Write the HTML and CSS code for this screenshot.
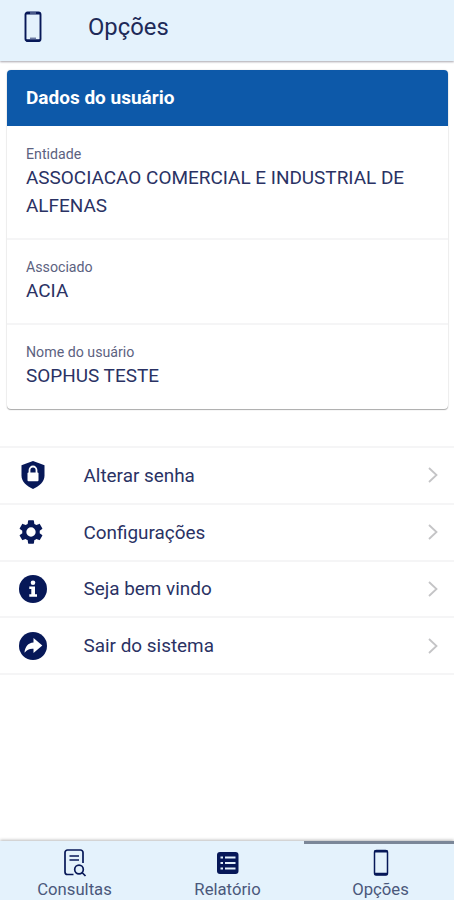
FILE: index.html
```html
<!DOCTYPE html>
<html lang="pt-BR">
<head>
    <meta charset="UTF-8">
    <title>Opções</title>
    <link rel="stylesheet" href="styles.css">
</head>
<body>
    <header class="toolbar">
        <svg class="toolbar-icon" viewBox="0 0 18 32">
            <rect x="1.500" y="1.500" width="15" height="28.500" rx="2" fill="none" stroke="currentColor" stroke-width="1.900"/>
            <path d="M2 2.200h14M2 29.400h14" stroke="currentColor" stroke-width="2.400"/>
            <path d="M6 27.200h6" stroke="currentColor" stroke-width=".8"/>
            <path d="M6 2h6" stroke="#e4f2fc" stroke-width=".6"/>
        </svg>
        <h1>Opções</h1>
    </header>

    <main>
        <!-- Dados do usuário -->
        <section class="card">
            <h2>Dados do usuário</h2>
            <div class="field">
                <span class="label">Entidade</span>
                <p>ASSOCIACAO COMERCIAL E INDUSTRIAL DE ALFENAS</p>
            </div>
            <div class="field">
                <span class="label">Associado</span>
                <p>ACIA</p>
            </div>
            <div class="field">
                <span class="label">Nome do usuário</span>
                <p>SOPHUS TESTE</p>
            </div>
        </section>

        <!-- Menu -->
        <nav class="menu">
            <a href="#">
                <svg class="menu-icon" viewBox="0 0 28 28">
                    <path d="M14 0l11.500 4.200v10.300c0 6-5 10.700-11.500 13.500C7.500 25.200 2.500 20.500 2.500 14.500V4.200z" fill="currentColor"/>
                    <path d="M10.500 12V9a3.500 3.500 0 0 1 7 0V12" fill="none" stroke="#fff" stroke-width="1.800"/>
                    <rect x="8.500" y="11.500" width="11" height="8.800" rx="1" fill="#fff"/>
                </svg>
                <span>Alterar senha</span>
                <svg class="chevron" viewBox="0 0 10 16"><path d="M1 1l7.500 7L1 15"/></svg>
            </a>
            <a href="#">
                <svg class="menu-icon gear" viewBox="0 0 24 24">
                    <path fill="currentColor" d="M19.430 12.980c.04-.32.07-.64.07-.98s-.03-.66-.07-.98l2.110-1.650c.19-.15.24-.42.12-.64l-2-3.460c-.12-.22-.39-.3-.61-.22l-2.490 1c-.52-.4-1.080-.73-1.690-.98l-.38-2.650C14.460 2.180 14.250 2 14 2h-4c-.25 0-.46.18-.49.42l-.38 2.650c-.61.25-1.170.59-1.690.98l-2.490-1c-.23-.09-.49 0-.61.22l-2 3.460c-.13.22-.07.49.12.64l2.110 1.650c-.04.32-.07.65-.07.98s.03.66.07.98l-2.110 1.650c-.19.15-.24.42-.12.64l2 3.460c.12.22.39.3.61.22l2.490-1c.52.4 1.080.73 1.690.98l.38 2.650c.03.24.24.42.49.42h4c.25 0 .46-.18.49-.42l.38-2.650c.61-.25 1.170-.59 1.690-.98l2.490 1c.23.09.49 0 .61-.22l2-3.460c.12-.22.07-.49-.12-.64l-2.110-1.650zM12 16a4 4 0 1 1 0-8 4 4 0 0 1 0 8z"/>
                </svg>
                <span>Configurações</span>
                <svg class="chevron" viewBox="0 0 10 16"><path d="M1 1l7.500 7L1 15"/></svg>
            </a>
            <a href="#">
                <svg class="menu-icon" viewBox="0 0 28 28">
                    <circle cx="14" cy="14" r="14" fill="currentColor"/>
                    <circle cx="14" cy="7.800" r="2.300" fill="#fff"/>
                    <path d="M10.300 11.500h5.700v7.700h2v2.500h-7.700v-2.500h2v-5.200h-2z" fill="#fff"/>
                </svg>
                <span>Seja bem vindo</span>
                <svg class="chevron" viewBox="0 0 10 16"><path d="M1 1l7.500 7L1 15"/></svg>
            </a>
            <a href="#">
                <svg class="menu-icon" viewBox="0 0 28 28">
                    <circle cx="14" cy="14" r="14" fill="currentColor"/>
                    <path d="M14.500 6l8.800 7.500-8.800 7.500v-4.300c-4-.3-6.500 1-9 4 .5-6 3.500-9.700 9-10.200z" fill="#fff"/>
                </svg>
                <span>Sair do sistema</span>
                <svg class="chevron" viewBox="0 0 10 16"><path d="M1 1l7.500 7L1 15"/></svg>
            </a>
        </nav>
    </main>

    <footer class="tabs">
        <a href="#">
            <svg viewBox="0 0 28 28">
                <g fill="none" stroke="currentColor" stroke-width="1.700">
                    <path d="M12.500 25.500H6.500a2.500 2.500 0 0 1-2.500-2.500V3.500A2.500 2.500 0 0 1 6.500 1h13a2.500 2.500 0 0 1 2.500 2.500V14"/>
                    <path d="M8.500 7h9.500M8.500 11h9.500" stroke-width="1.300"/>
                    <circle cx="18" cy="20.500" r="4.300"/>
                    <path d="M21 23.500l3.500 3.500"/>
                </g>
            </svg>
            <span>Consultas</span>
        </a>
        <a href="#">
            <svg viewBox="0 0 28 28">
                <rect x="3" y="3" width="21.500" height="22" rx="3" fill="currentColor"/>
                <path d="M6.500 8.500h2.500M6.500 14h2.500M6.500 19.500h2.500M11 8.500h10.500M11 14h10.500M11 19.500h10.500" stroke="#e4f2fc" stroke-width="2"/>
            </svg>
            <span>Relatório</span>
        </a>
        <a href="#" class="active">
            <svg viewBox="0 0 28 28">
                <rect x="7.500" y="1.500" width="13" height="24.500" rx="2" fill="none" stroke="currentColor" stroke-width="1.500"/>
                <path d="M7.500 2.300h13M7.500 25h13" stroke="currentColor" stroke-width="2.400"/>
            </svg>
            <span>Opções</span>
        </a>
    </footer>
</body>
</html>
```

FILE: styles.css
```css
:root {
    --navy: #071858;
    --blue: #0d59a9;
    --light: #e4f2fc;
    --line: #f5f5f6;
}

* {
    box-sizing: border-box;
}

body {
    display: flex;
    flex-direction: column;
    height: 100vh;
    margin: 0;
    overflow: hidden;
    font-family: Roboto, sans-serif;
    background-color: #fff;
    color: #2a3264;
}

h1, h2, p {
    margin: 0;
}

a {
    color: inherit;
    text-decoration: none;
}

.toolbar {
    display: flex;
    align-items: center;
    height: 61px;
    padding: 0 24px 7px;
    background-color: var(--light);
    box-shadow: 0 1px 2px #a9a6ae;
}

.toolbar-icon {
    width: 18px;
    height: 32px;
    margin-right: 46px;
    color: var(--navy);
}

.toolbar h1 {
    font-size: 23.800px;
    font-weight: 450;
    color: #202a58;
}

main {
    flex: 1;
}

.card {
    height: 339px;
    margin: 9px 6px 0 7px;
    border-radius: 4px;
    overflow: hidden;
    box-shadow: 0 1px 1px #aaa, 0 0 2px #ddd;
}

.card h2 {
    height: 56px;
    padding-left: 19px;
    background-color: var(--blue);
    color: #fff;
    font-size: 19px;
    font-weight: 700;
    line-height: 55px;
}

.field {
    height: 85px;
    padding: 18px 19px 0;
    border-bottom: 2px solid var(--line);
}

.field:nth-child(2) {
    height: 114px;
    padding-top: 19px;
}

.field:last-child {
    border-bottom: none;
}

.label {
    display: block;
    font-size: 14.200px;
    line-height: 19px;
    color: #5c627f;
}

.field p {
    font-size: 18.950px;
    line-height: 28px;
}

.menu {
    margin-top: 37px;
    border-top: 2px solid var(--line);
}

.menu a {
    display: flex;
    align-items: center;
    height: 56.750px;
    border-bottom: 2px solid var(--line);
    padding: 0 16px 0 19px;
    font-size: 18.900px;
}

.menu a span {
    flex: 1;
}

.menu-icon {
    width: 28px;
    height: 28px;
    margin-right: 36.500px;
    color: var(--navy);
}

.menu-icon.gear {
    margin: 0 38.500px 0 -2px;
}

.chevron {
    width: 10px;
    height: 16px;
    fill: none;
    stroke: #c4c4c6;
    stroke-width: 1.8;
}

.tabs {
    display: grid;
    grid-template-columns: 149px 155px 150px;
    height: 59px;
    background-color: var(--light);
    box-shadow: 0 -1px 3px #bbb;
}

.tabs a {
    display: flex;
    flex-direction: column;
    align-items: center;
    padding-top: 5px;
    border-top: 3px solid transparent;
    font-size: 16.700px;
    line-height: 20px;
    color: #4b587b;
}

.tabs a:nth-child(2) {
    padding-left: 2px;
}

.tabs a.active {
    padding-left: 3px;
    border-color: #7b8798;
}

.tabs svg {
    width: 28px;
    height: 28px;
    margin-bottom: 3px;
    color: var(--navy);
}
```
